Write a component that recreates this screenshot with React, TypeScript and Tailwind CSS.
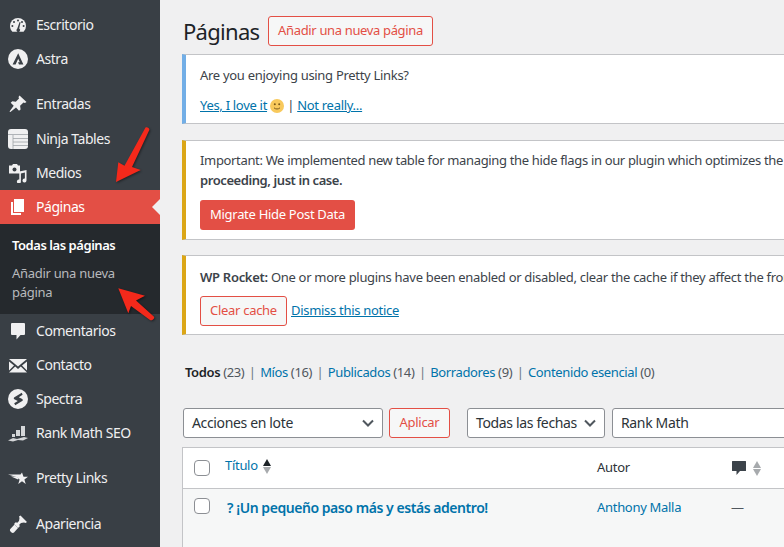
import type { ReactNode } from "react";

const font = "font-['Noto_Sans','Open_Sans',sans-serif]";

function Dash() {
  return (
    <svg viewBox="0 0 20 20" className="h-5 w-5 fill-[#f0f0f1]">
      <path d="M10 3a8 8 0 0 0-8 8c0 2.200.9 4.300 2.400 5.700h11.200A8 8 0 0 0 18 11a8 8 0 0 0-8-8Z" />
      <g className="fill-[#393f45]">
        <circle cx="10" cy="5.500" r="1" />
        <circle cx="6" cy="7" r="1" />
        <circle cx="14" cy="7" r="1" />
        <circle cx="4.400" cy="11" r="1" />
        <circle cx="15.600" cy="11" r="1" />
        <path d="m12.600 7.200-1.400 6.400a1.800 1.800 0 1 1-2 .1l2.400-6.800Z" />
      </g>
    </svg>
  );
}

function Astra() {
  return (
    <svg viewBox="0 0 20 20" className="h-5 w-5">
      <circle cx="10" cy="10" r="10" fill="#f0f0f1" />
      <path d="M10.200 4.200 4.600 15.400h3l2.600-5.600 1.600 3.400-1.800.1 1 2.100h4.400Z" fill="#393f45" />
    </svg>
  );
}

function Pin() {
  return (
    <svg viewBox="0 0 20 20" className="h-5 w-5 fill-[#f0f0f1]">
      <path d="m11.500 1.500 7 6.500-1.600 1-1.400-.6-3.400 3.400.5 3.600-1.600 1.400-3-3.200L2.400 18l-.9-.6 4.200-5.600-3-3 1.600-1.500 3.500.5 3.200-3.400-.5-1.500Z" />
    </svg>
  );
}

function NinjaTable() {
  return (
    <svg viewBox="0 0 20 20" className="h-5 w-5">
      <rect x="0" y="0" width="20" height="20" rx="3" fill="#f0f0f1" />
      <path d="M0 5.500h20M5 9.500h15M5 13h15M5 16.500h15M5 6v14" stroke="#9ea3a8" strokeWidth="0.8" fill="none" />
    </svg>
  );
}

function Media() {
  return (
    <svg viewBox="0 0 20 20" className="h-5 w-5 fill-[#f0f0f1]">
      <path d="M1 2.500h3l1-1.500h4l1 1.500h2v8H1Z" />
      <circle cx="6.500" cy="6.500" r="2" fill="#393f45" />
      <path d="M18.500 7v10.500a2 2 0 1 1-1.600-2V9.500l-4 1v8a2 2 0 1 1-1.600-2V8.500Z" />
    </svg>
  );
}

function Pages() {
  return (
    <svg viewBox="0 0 20 20" className="h-5 w-5 fill-white">
      <path d="M6 2h10v13H6Z" />
      <path d="M3 5h2v11h8v2H3Z" />
    </svg>
  );
}

function Comment() {
  return (
    <svg viewBox="0 0 20 20" className="h-5 w-5 fill-[#f0f0f1]">
      <path d="M4 2h12a1 1 0 0 1 1 1v10a1 1 0 0 1-1 1h-3.500L8.500 18.500V14H4a1 1 0 0 1-1-1V3a1 1 0 0 1 1-1Z" />
    </svg>
  );
}

function Mail() {
  return (
    <svg viewBox="0 0 20 20" className="h-5 w-5 fill-[#f0f0f1]">
      <path d="M1 4h18L10 11.500Z" />
      <path d="M1 6.500 6 10.600 1 15.500ZM19 6.500 14 10.600l5 4.900ZM7.200 11.600 10 14l2.800-2.400 6.200 6H1Z" />
    </svg>
  );
}

function Spectra() {
  return (
    <svg viewBox="0 0 20 20" className="h-5 w-5">
      <circle cx="10" cy="10" r="10" fill="#f0f0f1" />
      <path d="M13.800 3.800 6.400 8.200c-.8.500-.8 1.600 0 2.100l3.400 1.600-3.600 2.300 1 2 7-4.200c.8-.5.800-1.600 0-2.100L10.800 8.200l3.800-2.400Z" fill="#393f45" />
    </svg>
  );
}

function RankMath() {
  return (
    <svg viewBox="0 0 20 20" className="h-5 w-5 fill-[#d5d7d9]">
      <path d="M13 3h4v10h-4ZM8 7h4v6H8ZM4 11h3v3H4ZM0 17.500l5-2.500 4 1 7-2 4 1-5 2.500-5-.5-5 1.500Z" />
    </svg>
  );
}

function PrettyLinks() {
  return (
    <svg viewBox="0 0 20 20" className="h-5 w-5 fill-[#f0f0f1]">
      <path d="m14 4.500 1.500 4.200 4.500.1-3.600 2.700 1.300 4.400-3.700-2.600-3.700 2.600 1.300-4.400L8.500 9 0 6.500h12.500Z" />
      <path d="M3 8.500h5.500l2 2-.4 1Z" />
    </svg>
  );
}

function Brush() {
  return (
    <svg viewBox="0 0 20 20" className="h-5 w-5 fill-[#f0f0f1]">
      <path d="M12.500 1.500 19 8l-1.500 1-1.500-.5-3 .5-2 2 1 1-2 2-4-4 2-2 1 1 2-2 .5-3-.5-1.500Z" />
      <path d="M6.500 10.500 10 14l-4 4.500c-.8.800-2 .5-3-.5s-1.500-2.200-.7-3Z" />
    </svg>
  );
}

type Item = { label: string; icon: ReactNode; gap?: string };

const itemsTop: Item[] = [
  { label: "Escritorio", icon: <Dash /> },
  { label: "Astra", icon: <Astra /> },
  { label: "Entradas", icon: <Pin />, gap: "mt-[11px]" },
  { label: "Ninja Tables", icon: <NinjaTable />, gap: "mt-[1px]" },
  { label: "Medios", icon: <Media /> },
];

const itemsBottom: Item[] = [
  { label: "Comentarios", icon: <Comment /> },
  { label: "Contacto", icon: <Mail /> },
  { label: "Spectra", icon: <Spectra /> },
  { label: "Rank Math SEO", icon: <RankMath /> },
  { label: "Pretty Links", icon: <PrettyLinks />, gap: "mt-[11px]" },
  { label: "Apariencia", icon: <Brush />, gap: "mt-[12px]" },
];

function MenuRow({ item }: { item: Item }) {
  return (
    <div className={`flex h-[34px] items-center gap-[8px] pl-[8px] text-[14px] tracking-[-0.45px] text-[#f0f0f1] ${item.gap ?? ""}`}>
      {item.icon}
      <span className="-translate-y-px">{item.label}</span>
    </div>
  );
}

function Sidebar() {
  return (
    <aside className="w-[160px] shrink-0 bg-[#393f45] pt-[8px]">
      {itemsTop.map(i => (
        <MenuRow key={i.label} item={i} />
      ))}
      <div className="relative flex h-[34px] items-center gap-[8px] bg-[#e34f45] pl-[8px] text-[14px] tracking-[-0.45px] text-white">
        <Pages />
        <span className="-translate-y-px">Páginas</span>
        <span className="absolute right-0 top-[9px] h-0 w-0 border-y-[8px] border-r-[8px] border-y-transparent border-r-[#f0f0f1]" />
      </div>
      <div className="h-[90px] bg-[#25292d] px-[12px] pt-[12px] text-[13px] leading-[19px] tracking-[-0.3px]">
        <p className="font-semibold tracking-[-0.45px] text-white">Todas las páginas</p>
        <p className="mt-[9px] text-[#b8babd]">Añadir una nueva página</p>
      </div>
      {itemsBottom.map(i => (
        <MenuRow key={i.label} item={i} />
      ))}
    </aside>
  );
}

function Notice({ color, children, className }: { color: string; children: ReactNode; className: string }) {
  return (
    <div
      className={`w-[640px] overflow-hidden whitespace-nowrap border-y border-y-[#c3c4c7] bg-white pl-[14px] text-[13px] tracking-[-0.3px] text-[#3c434a] ${color} ${className}`}
    >
      {children}
    </div>
  );
}

function Chevron() {
  return (
    <svg viewBox="0 0 16 16" className="h-4 w-4 fill-none stroke-[#50575e] stroke-2">
      <path d="m3 5.500 5 5 5-5" />
    </svg>
  );
}

function SelectBox({ label, className }: { label: string; className: string }) {
  return (
    <div className={`flex h-[30px] shrink-0 items-center justify-between rounded-[3px] border border-[#8c8f94] bg-white pl-[8px] pr-[6px] text-[14px] tracking-[-0.35px] text-[#2c3338] ${className}`}>
      <span className="-translate-y-px whitespace-nowrap">{label}</span>
      <Chevron />
    </div>
  );
}

function Checkbox() {
  return <span className="block h-4 w-4 rounded-[4px] border border-[#8c8f94] bg-white" />;
}

function SortArrows({ up }: { up: string }) {
  return (
    <span className="flex flex-col gap-[1px]">
      <span className={`h-0 w-0 border-x-[4px] border-b-[7px] border-x-transparent ${up}`} />
      <span className="h-0 w-0 border-x-[4px] border-t-[7px] border-x-transparent border-t-[#a7aaad]" />
    </span>
  );
}

function Views() {
  const views = [
    { label: "Míos", count: 16 },
    { label: "Publicados", count: 14 },
    { label: "Borradores", count: 9 },
    { label: "Contenido esencial", count: 0 },
  ];
  return (
    <div className="ml-[3px] mt-[28px] flex h-[20px] items-center whitespace-pre text-[13px] tracking-[-0.38px] text-[#50575e]">
      <span className="font-semibold text-[#1d2327]">Todos</span>
      <span className="ml-[3px]">(23)</span>
      {views.map(v => (
        <span key={v.label}>
          <span className="mx-[4.5px] text-[#6c7781]">|</span>
          <span className="text-[#0073aa]">{v.label}</span> ({v.count})
        </span>
      ))}
    </div>
  );
}

function Smile() {
  return (
    <svg viewBox="0 0 14 14" className="inline-block h-[14px] w-[14px] translate-y-[-1px]">
      <circle cx="7" cy="7" r="7" fill="#f8c95c" />
      <circle cx="4.800" cy="5.300" r="1" fill="#7a5a1c" />
      <circle cx="9.200" cy="5.300" r="1" fill="#7a5a1c" />
      <path d="M4 8.800c1.500 1.600 4.500 1.600 6 0" stroke="#7a5a1c" fill="none" />
    </svg>
  );
}

function Arrows() {
  return (
    <svg viewBox="0 0 784 547" className="pointer-events-none absolute left-0 top-0 h-[547px] w-[784px] drop-shadow-[1px_1px_1px_rgba(0,0,0,0.45)]">
      <path d="M145.500 127.500c1.500-1 4.300.5 3.800 2.500L132 167l8.700 3L116 182l2.300-19.700 6.200 3.400Z" fill="#f4291b" />
      <path d="m118.300 288.300 26.700 7.400-9 4.800 18 16.200c1 1.800-2 4.300-4 3.300L131 306l-2.700 7.300Z" fill="#f4291b" />
    </svg>
  );
}

export default function App() {
  return (
    <div className={`relative flex h-[547px] w-[784px] overflow-hidden bg-[#f0f0f1] ${font}`}>
      <Sidebar />
      <main className="min-w-0 flex-1 overflow-hidden pl-[22px]">
        <div className="mt-[16px] flex h-[30px] items-center gap-[9px]">
          <h1 className="w-[77px] pl-[1px] text-[22px] tracking-[-0.7px] text-[#1d2327]">Páginas</h1>
          <span className="flex h-[30px] w-[165px] items-center justify-center rounded-[3px] border border-[#e34f45] bg-[#f6f7f7] text-[13px] tracking-[-0.35px] text-[#e34f45]">
            Añadir una nueva página
          </span>
        </div>

        <Notice color="border-l-4 border-l-[#72aee6]" className="mt-[8px] h-[70px] pt-[10px]">
          <p className="leading-[20px]">Are you enjoying using Pretty Links?</p>
          <p className="mt-[10px] leading-[20px]">
            <span className="text-[#0073aa] underline">Yes, I love it</span> <Smile /> |{" "}
            <span className="text-[#0073aa] underline">Not really...</span>
          </p>
        </Notice>

        <Notice color="border-l-4 border-l-[#dba617]" className="mt-[16px] h-[100px] pt-[9px]">
          <p className="leading-[20px] tracking-[-0.34px]">Important: We implemented new table for managing the hide flags in our plugin which optimizes the database. Please back up</p>
          <p className="font-semibold leading-[20px] tracking-[-0.42px]">proceeding, just in case.</p>
          <span className="mt-[10px] inline-flex h-[30px] w-[155px] items-center justify-center rounded-[3px] bg-[#e34f45] text-white">
            Migrate Hide Post Data
          </span>
        </Notice>

        <Notice color="border-l-4 border-l-[#dba617]" className="mt-[15px] h-[80px] pt-[11px]">
          <p className="leading-[20px]">
            <span className="font-semibold">WP Rocket:</span> One or more plugins have been enabled or disabled, clear the cache if they affect the front end of your site.
          </p>
          <div className="mt-[9px] flex items-center gap-[4px]">
            <span className="flex h-[30px] w-[87px] items-center justify-center rounded-[3px] border border-[#e34f45] bg-[#f6f7f7] text-[#e34f45]">
              Clear cache
            </span>
            <span className="text-[#0073aa] underline">Dismiss this notice</span>
          </div>
        </Notice>

        <Views />

        <div className="ml-[1px] mt-[25px] flex items-center">
          <SelectBox label="Acciones en lote" className="w-[200px]" />
          <span className="ml-[6px] flex h-[30px] w-[61px] shrink-0 items-center justify-center rounded-[3px] border border-[#e34f45] bg-[#f6f7f7] text-[13px] tracking-[-0.3px] text-[#e34f45]">
            Aplicar
          </span>
          <SelectBox label="Todas las fechas" className="ml-[17px] w-[138px]" />
          <SelectBox label="Rank Math" className="ml-[7px] w-[220px]" />
        </div>

        <div className="mt-[9px] w-[640px] border border-[#c3c4c7] bg-white">
          <div className="flex h-[41px] items-center border-b border-[#c3c4c7] text-[13px] tracking-[-0.3px]">
            <span className="ml-[11px] w-[31px]"><Checkbox /></span>
            <span className="flex w-[372px] items-center gap-[5px] text-[#0073aa]">
              <span className="-translate-y-[2px]">Título</span>
              <span className="-translate-y-[2px]"><SortArrows up="border-b-[#1d2327]" /></span>
            </span>
            <span className="w-[134px] text-[#2c3338]">Autor</span>
            <span className="flex items-center gap-[6px]">
              <svg viewBox="0 0 16 16" className="h-4 w-4 fill-[#3c434a]">
                <path d="M1.500 1h13a.5.5 0 0 1 .5.500v9a.5.5 0 0 1-.5.5H9l-3.500 4v-4h-4a.5.5 0 0 1-.5-.5v-9a.5.5 0 0 1 .5-.5Z" />
              </svg>
              <SortArrows up="border-b-[#a7aaad]" />
            </span>
          </div>
          <div className="flex h-[70px] items-start bg-[#f6f7f7] pt-[9px] text-[13px] tracking-[-0.3px]">
            <span className="ml-[11px] w-[33px]"><Checkbox /></span>
            <span className="w-[370px] text-[14px] leading-[20px] font-semibold tracking-[-0.45px] text-[#0073aa]">? ¡Un pequeño paso más y estás adentro!</span>
            <span className="w-[134px] text-[#0073aa]">Anthony Malla</span>
            <span className="text-[#50575e]">—</span>
          </div>
        </div>
      </main>
      <Arrows />
    </div>
  );
}
